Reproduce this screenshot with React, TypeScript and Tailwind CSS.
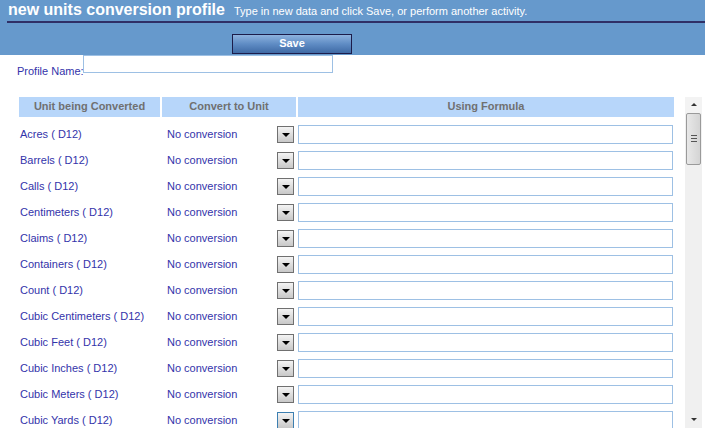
const units = [
  "Acres",
  "Barrels",
  "Calls",
  "Centimeters",
  "Claims",
  "Containers",
  "Count",
  "Cubic Centimeters",
  "Cubic Feet",
  "Cubic Inches",
  "Cubic Meters",
  "Cubic Yards",
];

function DropButton({ active }: { active?: boolean }) {
  return (
    <div
      className={
        "flex h-[17px] w-[17px] items-center justify-center border bg-gradient-to-b from-[#f4f4f4] to-[#c8c8c8] " +
        (active ? "border-[#3c7fb1] from-[#eef6fc] to-[#b9d9f0]" : "border-[#707070]")
      }
    >
      <div className="mt-[2px] h-0 w-0 border-x-[4px] border-t-[4px] border-x-transparent border-t-black" />
    </div>
  );
}

function Scrollbar() {
  return (
    <div className="flex h-full w-[17px] flex-col bg-[#f0f0f0]">
      <div className="flex h-[16px] items-center justify-center bg-[#f3f3f3]">
        <div className="h-0 w-0 border-x-[3px] border-b-[3px] border-x-transparent border-b-[#333]" />
      </div>
      <div className="mx-[1px] flex h-[52px] flex-col items-center justify-center gap-[2px] rounded-[2px] border border-[#9a9a9a] bg-gradient-to-r from-[#e8e8e8] to-[#d4d4d4]">
        <div className="h-px w-[6px] bg-[#555]" />
        <div className="h-px w-[6px] bg-[#555]" />
        <div className="h-px w-[6px] bg-[#555]" />
      </div>
      <div className="flex-1" />
      <div className="flex h-[16px] items-center justify-center">
        <div className="h-0 w-0 border-x-[3px] border-t-[3px] border-x-transparent border-t-[#333]" />
      </div>
    </div>
  );
}

export default function App() {
  return (
    <div className="h-[428px] w-[705px] overflow-hidden bg-white font-['Liberation_Sans',Arial,sans-serif] text-[11px]">
      <div className="h-[55px] bg-[#6699cc] pt-[1px]">
        <div className="ml-[7px] flex items-baseline border-b-2 border-[#2f2f66] pb-[1px] pl-[1px]">
          <h1 className="text-[16px] font-bold leading-[18px] text-white">new units conversion profile</h1>
          <span className="ml-[9px] text-[11px] text-white">
            Type in new data and click Save, or perform another activity.
          </span>
        </div>
        <div className="mt-[11px] pl-[232px]">
          <button className="h-[20px] w-[120px] border border-[#1c1c4a] bg-gradient-to-b from-[#8db2de] via-[#5f8cc4] to-[#3f6aa5] text-[11px] font-bold text-white">
            Save
          </button>
        </div>
      </div>

      <div className="flex items-start pl-[17px]">
        <span className="mt-[8px] w-[66px] whitespace-nowrap text-[#3333aa]">Profile Name:</span>
        <input className="h-[18px] w-[250px] border border-[#9dc0e4] outline-none" />
      </div>

      <div className="mt-[17px] flex">
        <div className="ml-[19px] w-[656px]">
          <div className="flex gap-[2px] text-[11px] font-bold text-[#707070]">
            <div className="flex h-[20px] w-[141px] items-center justify-center bg-[#b7d6fa]">Unit being Converted</div>
            <div className="flex h-[20px] w-[134px] items-center justify-center bg-[#b7d6fa]">Convert to Unit</div>
            <div className="flex h-[20px] w-[376px] items-center justify-center bg-[#b7d6fa]">Using Formula</div>
          </div>
          <div className="mt-[8px] flex flex-col gap-[7px]">
            {units.map((u, i) => (
              <div key={u} className="flex h-[19px] items-center">
                <div className="w-[148px] whitespace-nowrap pl-[1px] text-[#3333aa]">{u} ( D12)</div>
                <div className="w-[110px] text-[#3333aa]">No conversion</div>
                <DropButton active={i === units.length - 1} />
                <input className="ml-[4px] h-[19px] w-[375px] border border-[#9dc0e4] bg-white outline-none" />
              </div>
            ))}
          </div>
        </div>
        <div className="ml-[10px] h-[331px]">
          <Scrollbar />
        </div>
      </div>
    </div>
  );
}
